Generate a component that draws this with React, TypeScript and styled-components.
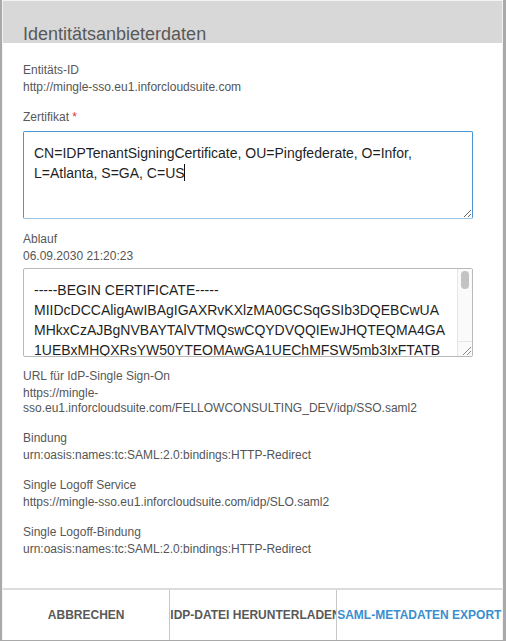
import styled, {createGlobalStyle} from "styled-components";

const certSubject = "CN=IDPTenantSigningCertificate, OU=Pingfederate, O=Infor, L=Atlanta, S=GA, C=US";

const certBody = [
 "-----BEGIN CERTIFICATE-----",
 "MIIDcDCCAligAwIBAgIGAXRvKXlzMA0GCSqGSIb3DQEBCwUA",
 "MHkxCzAJBgNVBAYTAlVTMQswCQYDVQQIEwJHQTEQMA4GA",
 "1UEBxMHQXRsYW50YTEOMAwGA1UEChMFSW5mb3IxFTATB",
 "gNVBAsTDFBpbmdmZWRlcmF0ZTEmMCQGA1UEAxMdSURQVGVuYW50U2lnbmluZ0NlcnRpZmljYXRlMB4XDTIwMDkwNzAxMjAyM1oXDTMwMDkwNzAxMjAyM1oweTELMAkGA1UEBhMCVVMxCzAJBgNVBAgTAkdBMRAwDgYDVQQHEwdBdGxhbnRhMQ4wDAYDVQQKEwVJbmZvcjEVMBMGA1UECxMMUGluZ2ZlZGVyYXRlMSYwJAYDVQQDEx1JRFBUZW5hbnRTaWduaW5nQ2VydGlmaWNhdGUwggEiMA0GCSqGSIb3DQEBAQUAA4IBDwAwggEKAoIBAQCkx8d3hT0u2Q9vJbW1yRzL7mPqK4sE5nXfA0cYt8bUj3oVhG2iNlDwRkCp6a9ZsT1eMy4xOq7FgBvHdLr5uWn0Kc3jPtI8mXe2YbAzQs6oNf1lGhUvR9wDiE4kJtCa7pMS0yVbLq3nZx5rTgWc8eFdHuA2oKjI6sP1mYvN9lQ4bXhE7tRzGwDf0Ua3iCkLpOy5nVs8eMqJ2TgHbXr1oW6cAzFt4YkPd7uSjN9lE3vIa0hBmQ5wRxG2LfZsKoC8pTy1nUe6DiV4gMj7cHbA3qWr9tSlF2NzXo5vKyP0EuRi8mBdLa1GhJcQ7wTfZsn3Ye6oVxUb4kCAwEAATANBgkqhkiG9w0BAQsFAAOCAQEAQk2x7pL9mRt3vWcY1uE8sZaDf0nJ6bHqKoT4iGyX5lNeV2rMgPdC8tBaUwS3jFhOzQ7cIy1kRv9xEmLp0nTbG4sAuW6dYfK2oJhZq5iCeN8rVlM3gXyDt1bQaP7wUsF0kHj9nEcO2vR4mTyI6LzBdG5aWqSe8pNu3hJfK1xVtCo7rYbM0lZi2gDsEa9nHwPq4uT6kLfXc3mRyB5jA8vSoN1dIeGh7Wt0bUzQp2KlCx9sMfY4nTaJ6rVgEi3HdOy8wLuP5cBk1qZm0XoNsR7jDe2tAhG9fKlWv4bIyS6pU3QnEc8MaTrx1zLg5VhYkJoF0idB7sC2uPw9XmHtNe4qRy6lAa3KcZjG",
 "-----END CERTIFICATE-----",
].join("\n");

const fields = [
 {label: "URL für IdP-Single Sign-On", value: "https://mingle-sso.eu1.inforcloudsuite.com/FELLOWCONSULTING_DEV/idp/SSO.saml2"},
 {label: "Bindung", value: "urn:oasis:names:tc:SAML:2.0:bindings:HTTP-Redirect"},
 {label: "Single Logoff Service", value: "https://mingle-sso.eu1.inforcloudsuite.com/idp/SLO.saml2"},
 {label: "Single Logoff-Bindung", value: "urn:oasis:names:tc:SAML:2.0:bindings:HTTP-Redirect"},
];

const ResizeGrip = () => (
 <svg width="13" height="13" viewBox="0 0 13 13">
  <path d="M4 12 L12 4 M8 12 L12 8" stroke="#8a8a8a" strokeWidth="1" fill="none" />
 </svg>
);

const App = () => (
 <>
  <GlobalStyle />
  <Modal>
   <Header>
    <Title>Identitätsanbieterdaten</Title>
   </Header>
   <Body>
    <Field>
     <Label>Entitäts-ID</Label>
     <Value>http://mingle-sso.eu1.inforcloudsuite.com</Value>
    </Field>
    <Field $gap={12}>
     <Label>Zertifikat <Required>*</Required></Label>
     <AreaWrap $top={6}>
      <TextArea $focused $height={88} defaultValue={certSubject} />
      <Caret />
     </AreaWrap>
    </Field>
    <Field $gap={11}>
     <Label>Ablauf</Label>
     <Value>06.09.2030 21:20:23</Value>
     <AreaWrap $top={4}>
      <TextArea $height={89} $scroll readOnly defaultValue={certBody} />
      <ScrollTrack>
       <ScrollThumb />
       <ScrollCorner>
        <ResizeGrip />
       </ScrollCorner>
      </ScrollTrack>
     </AreaWrap>
    </Field>
    {fields.map(f => (
     <Field key={f.label}>
      <Label>{f.label}</Label>
      <Value>{f.value}</Value>
     </Field>
    ))}
   </Body>
   <Footer>
    <FooterButton>Abbrechen</FooterButton>
    <FooterButton>IdP-Datei herunterladen</FooterButton>
    <FooterButton $primary>SAML-Metadaten export</FooterButton>
   </Footer>
  </Modal>
 </>
);

export default App;

const GlobalStyle = createGlobalStyle`
 html, body {
  margin: 0;
  padding: 0;
  background: #a9a9a9;
  font-family: "Liberation Sans", Arial, Helvetica, sans-serif;
 }
 * {
  box-sizing: border-box;
 }
`;

const Modal = styled.div`
 margin-left: 2px;
 width: 501px;
 height: 640px;
 background: #fff;
 border: 1px solid #f3f3f3;
 border-bottom: none;
 display: flex;
 flex-direction: column;
 overflow: hidden;
`;

const Header = styled.div`
 height: 42px;
 flex-shrink: 0;
 background: #d8d8d8;
 padding: 0 20px;
 display: flex;
 align-items: flex-end;
`;

const Title = styled.h1`
 margin: 0 0 -4px;
 font-size: 18px;
 line-height: 26px;
 font-weight: 400;
 color: #585858;
`;

const Body = styled.div`
 flex: 1;
 padding: 19px 29px 0 20px;
 overflow: hidden;
`;

const Field = styled.div<{$gap?: number}>`
 margin-bottom: ${({$gap}) => $gap ?? 14}px;
`;

const Label = styled.div`
 font-size: 12px;
 line-height: 16px;
 color: #585858;
 margin-bottom: 2px;
`;

const Required = styled.span`
 color: #d8363a;
`;

const Value = styled.div`
 font-size: 12px;
 line-height: 15px;
 color: #555;
`;

const AreaWrap = styled.div<{$top: number}>`
 position: relative;
 margin-top: ${({$top}) => $top}px;
`;

const TextArea = styled.textarea<{$focused?: boolean; $scroll?: boolean; $height: number}>`
 display: block;
 width: 100%;
 height: ${({$height}) => $height}px;
 padding: 11px ${({$scroll}) => ($scroll ? 24 : 10)}px 10px 10px;
 font-family: "Liberation Sans", Arial, Helvetica, sans-serif;
 font-size: 14px;
 line-height: 20px;
 color: #1f1f1f;
 background: #fff;
 border: 1px solid ${({$focused}) => ($focused ? "#4a95d2" : "#b9b9b9")};
 border-bottom-color: ${({$focused}) => ($focused ? "#9cc5e5" : "#b9b9b9")};
 border-radius: 2px;
 outline: none;
 resize: ${({$scroll}) => ($scroll ? "none" : "vertical")};
 overflow: hidden;
`;

const Caret = styled.span`
 position: absolute;
 left: 161px;
 top: 33px;
 width: 1px;
 height: 17px;
 background: #111;
 pointer-events: none;
`;

const ScrollTrack = styled.div`
 position: absolute;
 top: 1px;
 right: 1px;
 bottom: 1px;
 width: 15px;
 background: #fafafa;
 border-left: 1px solid #e6e6e6;
 display: flex;
 flex-direction: column;
 align-items: center;
 padding-top: 2px;
`;

const ScrollThumb = styled.div`
 width: 8px;
 height: 18px;
 border-radius: 4px;
 background: #c3c3c3;
`;

const ScrollCorner = styled.div`
 margin-top: auto;
 width: 100%;
 height: 15px;
 border-top: 1px solid #e6e6e6;
 display: flex;
 align-items: flex-end;
 justify-content: flex-end;
`;

const Footer = styled.div`
 flex-shrink: 0;
 height: 52px;
 border-top: 2px solid #dcdcdc;
 display: grid;
 grid-template-columns: 1fr 1fr 1fr;
`;

const FooterButton = styled.button<{$primary?: boolean}>`
 min-width: 0;
 overflow: hidden;
 white-space: nowrap;
 text-align: center;
 background: #fff;
 border: none;
 border-left: 1px solid #c8c8c8;
 padding: 0;
 font-family: "Liberation Sans", Arial, Helvetica, sans-serif;
 font-size: 12px;
 font-weight: 700;
 text-transform: uppercase;
 color: ${({$primary}) => ($primary ? "#3a8fcf" : "#595959")};
 cursor: pointer;

 &:first-child {
  border-left: none;
 }
`;
